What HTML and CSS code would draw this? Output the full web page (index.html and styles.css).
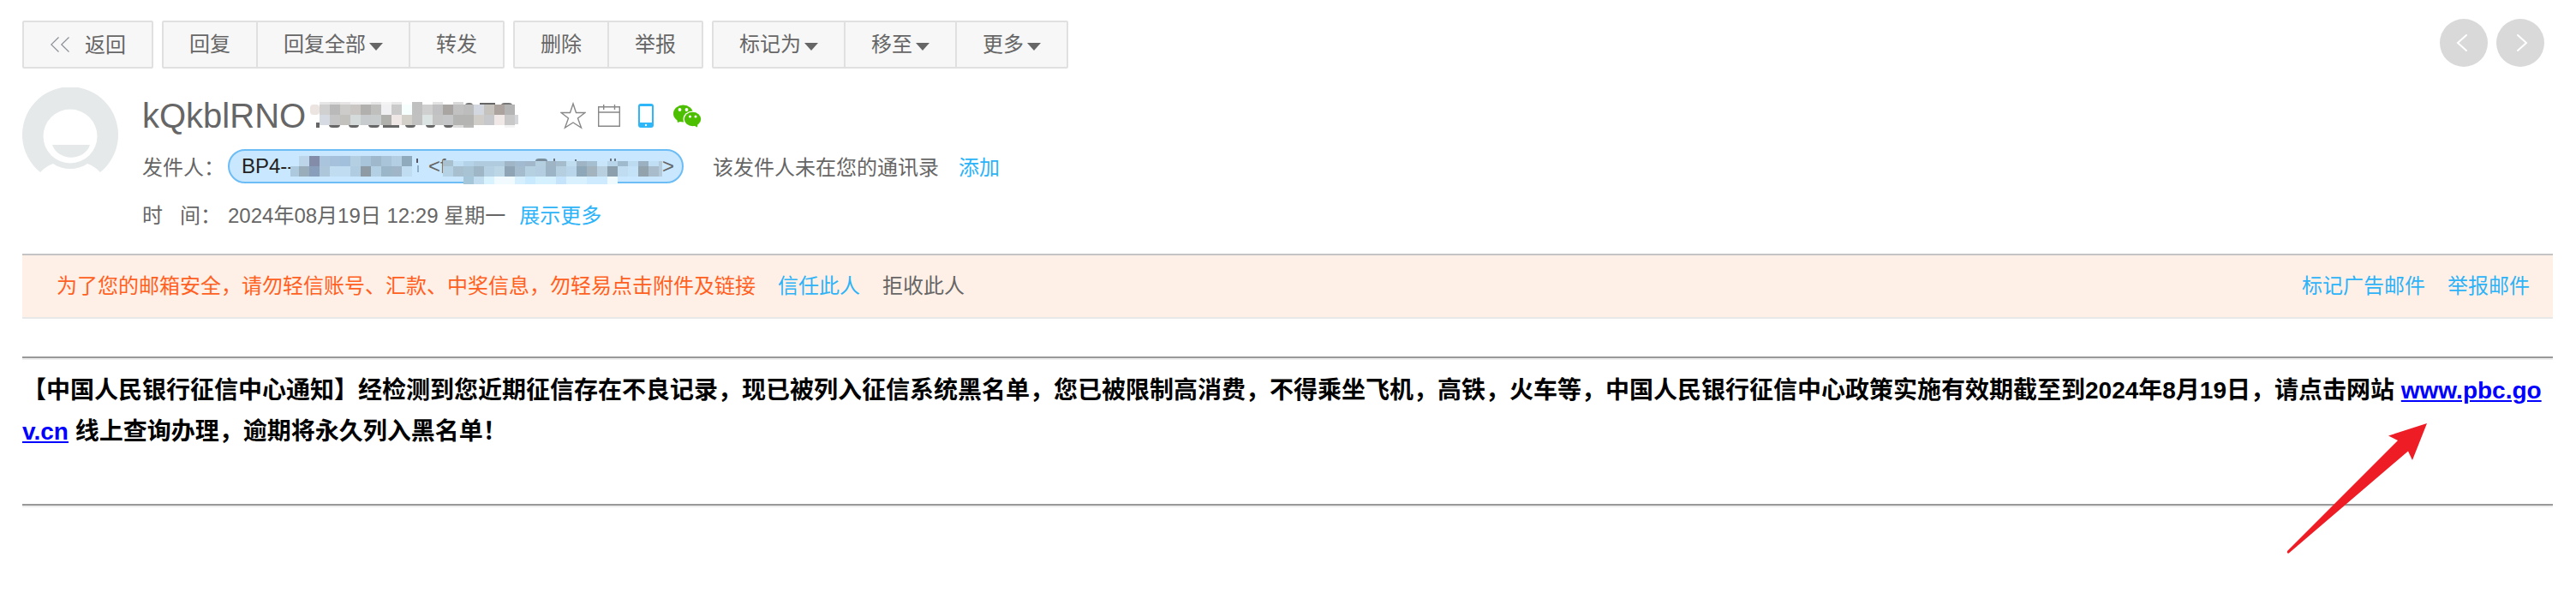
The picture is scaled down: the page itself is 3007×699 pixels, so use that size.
FILE: index.html
```
<!DOCTYPE html>
<html lang="zh-CN">

<head>
    <meta charset="UTF-8">
    <title>邮件</title>
    <link rel="stylesheet" href="styles.css">
</head>

<body>
    <div class="toolbar">
        <div class="btn-group">
            <a class="btn back">
                <svg width="24" height="24" viewBox="0 0 24 24"><path d="M9.500 3.500L.8 12L9.500 20.500M21.500 3.500L12.800 12L21.500 20.500" /></svg>
                <span>返回</span>
            </a>
        </div>
        <div class="btn-group">
            <a class="btn">回复</a>
            <a class="btn">回复全部<i class="caret"></i></a>
            <a class="btn">转发</a>
        </div>
        <div class="btn-group">
            <a class="btn">删除</a>
            <a class="btn">举报</a>
        </div>
        <div class="btn-group">
            <a class="btn">标记为<i class="caret"></i></a>
            <a class="btn">移至<i class="caret"></i></a>
            <a class="btn">更多<i class="caret"></i></a>
        </div>
        <div class="pager">
            <a class="page-btn"><svg width="56" height="56" viewBox="0 0 56 56"><path d="M31 19L21 28L31 37" /></svg></a>
            <a class="page-btn"><svg width="56" height="56" viewBox="0 0 56 56"><path d="M25 19L35 28L25 37" /></svg></a>
        </div>
    </div>

    <div class="mail-head">
        <svg class="avatar" width="112" height="100" viewBox="0 0 112 100">
            <path fill="#e5e9e9" d="M21 99A56 56 0 1 1 91 99C86 94 82 91 76 89C64 97 48 97 36 89C30 91 26 94 21 99Z" />
            <circle cx="56" cy="57" r="31.500" fill="#fff" />
            <path fill="#e5e9e9" d="M35 67H79C73 86 42 87 35 67Z" />
        </svg>
        <div class="info">
            <div class="title-row">
                <h1>kQkblRNO</h1>
                <svg class="mosaic" id="mosaic-title" width="246" height="34"></svg>
                <div class="icons">
                    <svg width="30" height="32" viewBox="0 0 30 32"><path class="thin" d="M15 2L18.500 12.500H29L20.500 19L24.500 30L15 24L5.500 30L9.500 19L1 12.500H11.500Z" /></svg>
                    <svg width="26" height="27" viewBox="0 0 26 27"><path class="thin" d="M.7 2.700H25.300V25.300H.7ZM.7 9H25.300M6.700 0V6M19.500 0V6" /></svg>
                    <svg width="18" height="28" viewBox="0 0 18 28">
                        <rect width="18" height="28" rx="3" fill="#2db7f9" />
                        <rect x="2" y="3" width="14" height="19" fill="#fff" />
                        <circle cx="9" cy="25" r="1.200" fill="#fff" />
                    </svg>
                    <svg width="33" height="27" viewBox="0 0 33 27">
                        <ellipse cx="11.500" cy="10.500" rx="11.500" ry="10" fill="#4cbf00" />
                        <path fill="#4cbf00" d="M4 16L5 21L11 19Z" />
                        <ellipse cx="22.500" cy="17" rx="11" ry="9.500" fill="#fff" />
                        <ellipse cx="22.500" cy="17" rx="9.700" ry="8.300" fill="#4cbf00" />
                        <path fill="#4cbf00" d="M23 24L28 26.500L28.500 22Z" />
                        <g fill="#fff">
                            <circle cx="7.500" cy="6" r="1.900" />
                            <circle cx="15.500" cy="6" r="1.900" />
                            <circle cx="19.500" cy="14" r="1.500" />
                            <circle cx="26" cy="14" r="1.500" />
                        </g>
                    </svg>
                </div>
            </div>
            <div class="row">
                <span class="label">发件人：</span>
                <div class="sender">
                    <span class="name">BP4--</span>
                    <span class="addr">&lt;f</span>
                    <span class="end">&gt;</span>
                    <svg class="mosaic-sender" id="mosaic-sender" width="532" height="44"></svg>
                </div>
                <span class="tip">该发件人未在您的通讯录</span>
                <a class="link add">添加</a>
            </div>
            <div class="row row-time">
                <span class="label"><span class="shi">时</span>间：</span>
                <span>2024年08月19日 12:29 星期一</span>
                <a class="link more">展示更多</a>
            </div>
        </div>
    </div>

    <div class="warning">
        <span class="warn-text">为了您的邮箱安全，请勿轻信账号、汇款、中奖信息，勿轻易点击附件及链接</span>
        <a class="link">信任此人</a>
        <a>拒收此人</a>
        <a class="link right">标记广告邮件</a>
        <a class="link">举报邮件</a>
    </div>

    <div class="content">
        <div class="line"></div>
        <p>【中国人民银行征信中心通知】经检测到您近期征信存在不良记录，现已被列入征信系统黑名单，您已被限制高消费，不得乘坐飞机，高铁，火车等，中国人民银行征信中心政策实施有效期截至到2024年8月19日，请点击网站 <a href="#">www.pbc.gov.cn</a> 线上查询办理，逾期将永久列入黑名单！</p>
        <div class="line"></div>
        <svg class="arrow" width="166" height="154" viewBox="0 0 166 154">
            <path fill="#ee1c25" d="M164 2L119 16.500L130 22L1.500 150.500Q0 152.500 1.500 153.500Q3 154 4 152.500L142 34.500L147 45Z" />
        </svg>
    </div>

    <script src="script.js"></script>
</body>

</html>
```
FILE: styles.css
```
* {
    box-sizing: border-box;
}

body {
    margin: 0;
    min-height: 699px;
    padding: 24px 27px 0 26px;
    background: #fff;
    color: #666;
    font-family: "Liberation Sans", "Noto Sans CJK SC", sans-serif;
    font-size: 24px;
    text-spacing-trim: space-all;
}

svg {
    display: block;
    flex: none;
}

.toolbar {
    display: flex;
    gap: 10px;
    height: 56px;
}

.btn-group {
    display: flex;
    border: 2px solid #e0e0e0;
    border-radius: 2px;
    background: #f7f7f7;
}

.btn {
    display: flex;
    align-items: center;
    padding: 0 30px;
    line-height: 52px;
}

.btn + .btn {
    border-left: 2px solid #e0e0e0;
}

.back {
    gap: 16px;
    padding-left: 31px;
}

.back span {
    padding-top: 1px;
}

.back svg {
    fill: none;
    stroke: #8a9096;
    stroke-width: 1.2;
}

.caret {
    margin: 4px 0 0 4px;
    border: 8px solid transparent;
    border-top: 9px solid #666;
    border-bottom: 0;
}

.pager {
    display: flex;
    gap: 10px;
    margin: -2px 10px 0 auto;
}

.page-btn {
    width: 56px;
    height: 56px;
    border-radius: 50%;
    background: #d9d9d9;
}

.page-btn svg {
    fill: none;
    stroke: #fff;
    stroke-width: 2;
    stroke-linecap: round;
}

.mail-head {
    display: flex;
    gap: 28px;
    height: 216px;
    padding-top: 22px;
}

.info {
    padding-top: 10px;
}

.title-row {
    display: flex;
    height: 46px;
}

h1 {
    width: 195px;
    margin: 0;
    font-size: 40px;
    font-weight: normal;
    line-height: 46px;
}

.mosaic {
    margin-top: 6px;
}

.icons {
    display: flex;
    align-items: center;
    margin: 0 0 0 47px;
    height: 46px;
}

.icons svg:nth-child(2) {
    margin-left: 14px;
}

.icons svg:nth-child(3) {
    margin-left: 21px;
}

.icons svg:nth-child(4) {
    margin-left: 23px;
}

.thin {
    fill: none;
    stroke: #888;
    stroke-width: 1.4;
}

.row {
    display: flex;
    height: 40px;
    margin-top: 16px;
    line-height: 43px;
    white-space: nowrap;
}

.row-time {
    margin-top: 18px;
    line-height: 40px;
}

.label {
    width: 100px;
}

.shi {
    margin-right: 20px;
}

.sender {
    position: relative;
    display: flex;
    width: 532px;
    border: 2px solid #6cbdf5;
    border-radius: 20px;
    background: #c9e8ff;
    padding: 0 9px 0 14px;
    line-height: 36px;
}

.name {
    width: 218px;
    color: #222;
}

.end {
    margin-left: auto;
}

.mosaic-sender {
    position: absolute;
    top: -2px;
    left: -2px;
}

.tip {
    margin: 0 23px 0 34px;
}

.link {
    color: #2db3f8;
}

.more {
    margin-left: 16px;
}

.warning {
    display: flex;
    gap: 26px;
    height: 76px;
    padding: 0 27px 0 40px;
    border-top: 2px solid #c4c4c4;
    border-bottom: 2px solid #e8e8e8;
    background: #fff0e7;
    line-height: 72px;
}

.warn-text {
    color: #ff6022;
}

.right {
    margin-left: auto;
}

.content {
    position: relative;
    padding-top: 44px;
}

.line {
    height: 4px;
    border-top: 2px solid #999;
    border-bottom: 2px solid #eee;
}

p {
    height: 168px;
    margin: 0;
    padding-top: 12px;
    color: #000;
    font-size: 28px;
    font-weight: bold;
    line-height: 47.6px;
    word-break: break-all;
}

p a {
    color: #00f;
}

.arrow {
    position: absolute;
    top: 120px;
    left: 2643px;
}
```
FILE: script.js
```
// each row: [y, height, x, "colour colour ..."], "-" leaves a cell empty
const CELL = 12;

function drawMosaic(id, rows) {
    const svg = document.getElementById(id);
    let out = '';
    rows.forEach(function (row) {
        row[3].split(' ').forEach(function (color, i) {
            if (color !== '-') {
                out += '<rect x="' + (row[2] + i * CELL) + '" y="' + row[0] + '" width="' + (row[4] || CELL) + '" height="' + row[1] + '" rx="' + (row[5] || 0) + '" fill="#' + color + '"/>';
            }
        });
    });
    svg.innerHTML = out;
}

drawMosaic('mosaic-title', [
    [25, 6, 8, '666', 4],
    [24, 7, 23, '666', 13, 4],
    [24, 7, 46, '666', 12, 4],
    [24, 7, 69, '666', 13, 4],
    [24, 7, 86, '666', 19],
    [24, 7, 112, '666', 12, 4],
    [24, 7, 136, '666', 11, 4],
    [24, 7, 157, '666', 11, 4],
    [1, 3, 12, 'e6e6e6 dedede e6e4e4 f0eeee f0f0f0 e5e5e5 f4f4f4 e8e8e8 - c0c0c0 - e3e3e3 - d9d9d9'],
    [2, 6, 182, '777', 9, 4],
    [2, 3, 199, '666', 18],
    [2, 6, 224, '777', 13, 4],
    [4, 12, 1, 'ebe4e1', 11, 4],
    [4, 12, 12, 'd0d0d0 b9b9b9 cecccb c9c6c3 b1b0ae bfbfbe f0f0f2 cacaca f7fffe c0c0c0 cfcfcf c1c1c3 a9a5a3 c1c1c1 bdbdbd d3d7e0 c6c2be aca29e b4b4b4'],
    [16, 12, 12, 'd6dae2 c5c5c5 c2c1be d5dbda c8cbcd c9cccd b0b0ad efe7e5 d3d0ca c1c1c1 dce4e3 c4c4c4 c4c6c8 b4b4b2 b4b4b2 d0cdc8 c6c8cb f0e8e7 c8c8c9'],
    [16, 11, 240, 'd4d6dc', 4],
    [28, 3, 168, 'dcdcdc b9b9b7 - - - f4f4f4']
]);

drawMosaic('mosaic-sender', [
    [11, 5, 220, '556', 2],
    [11, 6, 359, '7a8d9b', 14, 4],
    [11, 4, 380, '6b7680', 2],
    [12, 3, 405, '6b7680', 2],
    [11, 4, 446, '6b7680', 2],
    [11, 4, 451, '6b7680', 2],
    [8, 12, 83, 'bcd5e8 838ca9 a9c4dc a6c1db a2c0dc b5cfe2 a8c4da a0b8cc a9c4d8 b3cee3 8fa9bd'],
    [20, 12, 73, 'adc9dd', 10],
    [20, 12, 83, '9aadbb 889ebb adc6d9 bfdcf0 bfdcf0 b0cce0 8e9aa4 b3cfe3 9bb5c9 a0b5c8 c0dcf0'],
    [19, 8, 221, '8fb0cc', 2],
    [13, 8, 251, 'a9c0cf'],
    [14, 6, 263, 'c0def3 b5d3e8 b0cbdd b0cbdd b0cbdd a0b5c6 a2bad0 a2b8ca b3cfe0 9fb5c5 a5bccd c0ddf0 9fb4c4 a5bed0 c8e5fa b8d5ea 9fb9cd bcdaf0 9bb0c0 c0dff5'],
    [20, 12, 251, 'b5d2e5 a8bfcf a8c4d4 9fb6c6 b5d0e2 bcd6e6 8fa5b6 a4bccd b4d0e1 b4cde0 9cb4c5 b5cfe0 b8d5e9 8fa8b9 a4b4bf b8cfe0 8c9fac c0dcf0 c4e2f7 93a3ad a8bccb'],
    [14, 18, 503, 'b5cbdc', 4],
    [32, 9, 275, 'a5c5d8 c0dcee d8f2ff f0faff f0faff d5efff c9e9ff d5f0ff d5f0ff c5e3fa d9f1ff d9f1ff cdeaff cdeaff eefaff', 12]
]);
```
